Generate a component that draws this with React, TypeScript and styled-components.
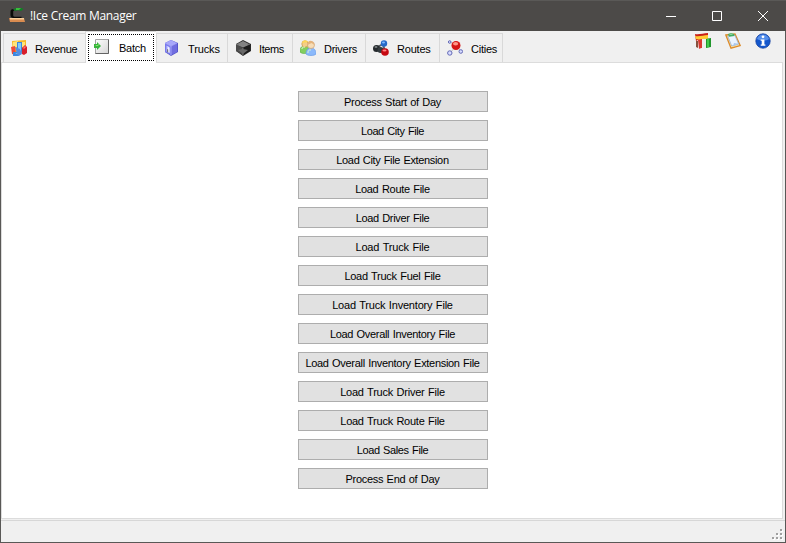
import React from "react";
import styled, { createGlobalStyle, css } from "styled-components";

const GlobalStyle = createGlobalStyle`
  * { box-sizing: border-box; }
  html, body { margin: 0; padding: 0; }
  body { overflow: hidden; background: #f0f0f0; }
`;

const AppWindow = styled.div`
  width: 786px;
  height: 543px;
  display: flex;
  flex-direction: column;
  border: 1px solid #595856;
  border-top: 0;
  background: #f0f0f0;
  color: #000;
  font: 11px/16px "Liberation Sans", Arial, sans-serif;
  word-spacing: 0.7px;
`;

const TitleBar = styled.header`
  flex: 0 0 31px;
  margin: 0 -1px;
  padding-left: 9px;
  display: flex;
  align-items: center;
  background: #4c4a48;
  border-top: 1px solid #5a5957;
  color: #fff;
  word-spacing: 0;
`;

const Title = styled.h1`
  flex: 1;
  margin: 0 0 0 5px;
  font: 400 12px/16px "Open Sans", "Noto Sans", sans-serif;
  letter-spacing: -0.3px;
`;

const Caption = styled.button`
  width: 46px;
  height: 30px;
  padding: 0 1px 0 0;
  border: 0;
  background: none;
  display: grid;
  place-items: center;
`;

const Header = styled.nav`
  flex: 0 0 31px;
  display: flex;
  align-items: flex-end;
  padding-left: 2px;
`;

const Tab = styled.button<{ $width: number; $active?: boolean; $spacing: number }>`
  width: ${(p) => p.$width}px;
  height: 29px;
  padding: 0 0 0 7px;
  display: flex;
  align-items: center;
  gap: 8px;
  border: solid #d9d9d9;
  border-width: 1px 0 0 1px;
  background: #f0f0f0;
  color: #000;
  font: inherit;
  word-spacing: inherit;
  letter-spacing: ${(p) => p.$spacing}px;
  white-space: nowrap;

  &:last-of-type { border-right-width: 1px; }

  ${(p) =>
    p.$active &&
    css`
      height: 32px;
      margin-bottom: -1px;
      padding: 2px;
      background: #fff;
      position: relative;
      z-index: 1;
    `}
`;

const TabLabel = styled.span`
  padding-top: 2px;
`;

const Focus = styled.span`
  width: 66px;
  height: 27px;
  padding: 0 0 2px 5px;
  display: flex;
  align-items: center;
  gap: 9px;
  border: 1px dotted #000;
`;

const Toolbar = styled.div`
  margin-left: auto;
  align-self: flex-start;
  display: flex;
  gap: 14px;
  padding: 2px 14px 0 0;
`;

const Panel = styled.main`
  flex: 0 0 457px;
  width: 782px;
  padding-top: 28px;
  display: flex;
  flex-direction: column;
  align-items: center;
  gap: 8px;
  border: 1px solid #dcdcdc;
  background: #fff;
`;

const BatchButton = styled.button<{ $spacing: number }>`
  width: 190px;
  height: 21px;
  flex: none;
  margin-left: 2px;
  padding: 1px 1px 0 0;
  border: 1px solid #adadad;
  background: #e1e1e1;
  color: #000;
  font: inherit;
  line-height: 18px;
  word-spacing: inherit;
  letter-spacing: ${(p) => p.$spacing}px;
  white-space: nowrap;
`;

const StatusBar = styled.footer`
  flex: 1;
  margin-top: 1px;
  display: flex;
  align-items: flex-end;
  justify-content: flex-end;
  padding: 0 1px 1px 0;
  border-top: 1px solid #d7d7d7;
`;

const Icon = styled.svg`
  width: 16px;
  height: 16px;
  flex: none;
  display: block;
`;

const LogoIcon = () => (
  <Icon viewBox="0 0 16 16">
    <path d="M0 10h15l1 4H1z" fill="#d98c50" />
    <path d="M1 10.2h14v1.2H1z" fill="#ffe0ad" />
    <path d="M5 1C2 1 1.5 2 1.5 4v3c0 2 1 3 3 3h8V8.700H5.500C4.500 8.700 4.200 8 4.200 7V4c0-1 .3-1.500 1.500-1.500z" fill="#090b09" />
    <path d="M4 1.500L7 0h6l1.500 1.300L12 3 9 2.200 6 3z" fill="#147d27" />
    <path d="M7 .3h5l-2 1.400H7z" fill="#46d543" />
  </Icon>
);

const RevenueIcon = () => (
  <Icon viewBox="0 0 16 16">
    <path d="M1 1l14-1v12L2 15z" fill="#f8ba26" />
    <path d="M2 2l5-1v6H2zM10 2h4v5h-4z" fill="#ffe579" />
    <path d="M0 7l4-1 1 9-4-1z" fill="#ef4838" />
    <path d="M6 2h5v8c0 4-2 6-5 6H2v-4h3c1 0 1-1 1-2z" fill="#3c87df" />
    <path d="M7 3h3v7c0 2-2 4-4 4H4c4-1 3-3 3-5z" fill="#80c9fb" />
    <path d="M4 7l5 2 2 5-4 2z" fill="#558de0" />
    <path d="M11 8l3-3 2 2v6l-3 2-2-1z" fill="#d81e2b" />
    <path d="M12 8l2-2 1 1-2 2z" fill="#ff7770" />
  </Icon>
);

const BatchIcon = () => (
  <Icon viewBox="0 0 16 16">
    <defs>
      <linearGradient id="paper" x2="1" y2="1">
        <stop stopColor="#fff" /><stop offset="1" stopColor="#d5d5d5" />
      </linearGradient>
    </defs>
    <path d="M1.5.5h13v14h-13z" fill="url(#paper)" stroke="#a5a5a5" />
    <path d="M14.5.5v14h-13" fill="none" stroke="#636363" />
    <path d="M0 5h3V3l4 4-4 4V9H0z" fill="#37b53c" />
    <path d="M1 6h3V5l1 1-2 1z" fill="#a4f080" />
  </Icon>
);

const TruckIcon = () => (
  <Icon viewBox="1 0 16 16">
    <path d="M8 0l7 3v9l-7 4-6-4V3z" fill="#5555ca" />
    <path d="M8 0l6 3-6 3-6-3z" fill="#a7a7fa" />
    <path d="M2 3l6 3v9l-6-3z" fill="#7779ec" />
    <path d="M8 6l6-3v9l-6 3z" fill="#706de0" />
    <path d="M3.500 5.500l3 1.500v6l-3-1.500z" fill="#c5c7ff" />
    <path d="M5 7l1.500.7v5L5 12z" fill="#f4f4ff" />
    <path d="M4 9l1.200.6v3L4 12z" fill="#757486" />
    <path d="M8 6v9M2 3l6 3 6-3" fill="none" stroke="#b9b9ff" strokeWidth=".7" />
  </Icon>
);

const ItemIcon = () => (
  <Icon viewBox="0 0 16 16">
    <path d="M8 0l8 4v7l-8 5-7-5V4z" fill="#292929" />
    <path d="M8 1l6 3-6 3-6-3z" fill="#828282" />
    <path d="M1 4l7 4v7l-7-4z" fill="#4a4a4a" />
    <path d="M8 8l7-4v7l-7 4z" fill="#1b1b1b" />
    <path d="M1 4l7 3 7-3M8 8v7" fill="none" stroke="#aaa" strokeWidth=".6" />
    <path d="M3 10l5-1 5 1-5 4z" fill="#686868" />
  </Icon>
);

const DriverIcon = () => (
  <Icon viewBox="0 0 16 16">
    <path d="M0 12c0-4 1-6 5-6s4 2 4 6c-2 2-7 2-9 0z" fill="#83cf60" stroke="#57ad41" strokeWidth=".6" />
    <circle cx="5" cy="4" r="3.2" fill="#f4ce87" stroke="#c69543" strokeWidth=".7" />
    <path d="M2 3c1-4 5-3 6-1z" fill="#ffd657" />
    <path d="M6 14c0-4 2-6 5-6s5 2 5 6c-2 2-8 2-10 0z" fill="#8bb9fb" stroke="#6a9de8" strokeWidth=".7" />
    <circle cx="11" cy="5" r="3.5" fill="#f7ddb6" stroke="#cda276" strokeWidth=".7" />
    <path d="M7.5 5c0-6 6-5 7 0l-3-2z" fill="#e5b37b" />
    <path d="M2 9c0-2 1-2 3-2M8 13c0-3 1-3 3-3" stroke="#dcfbd0" fill="none" />
  </Icon>
);

const RouteIcon = () => (
  <Icon viewBox="0 0 16 16">
    <path d="M3 8l7-4 2 8z" fill="none" stroke="#5d6266" strokeWidth="2" />
    <circle cx="11" cy="3.5" r="3.2" fill="#2569c7" />
    <circle cx="3.5" cy="8.500" r="3.5" fill="#252a2d" />
    <circle cx="7.500" cy="10" r="3" fill="#343b3f" />
    <circle cx="12" cy="12" r="3.8" fill="#c60911" />
    <ellipse cx="10.5" cy="2.5" rx="1.5" ry="1" fill="#80baff" />
    <ellipse cx="3" cy="7" rx="1.5" ry=".8" fill="#969da0" />
    <ellipse cx="11.5" cy="10.5" rx="2" ry="1" fill="#ff8585" />
  </Icon>
);

const CityIcon = () => (
  <Icon viewBox="0 0 16 16">
    <path d="M3 2l6 4-6 7M9 6l5 5" fill="none" stroke="#b4b4b4" strokeWidth=".8" />
    <circle cx="9" cy="5.5" r="4.5" fill="#d51515" />
    <ellipse cx="8.6" cy="3.7" rx="2.6" ry="1.7" fill="#ff9585" />
    <g fill="#d8dcff" stroke="#6369b5">
      <circle cx="2.7" cy="2" r="1.3" />
      <circle cx="2.8" cy="13" r="2.2" />
      <circle cx="13.8" cy="11.5" r="1.8" />
    </g>
  </Icon>
);

const FlagsIcon = () => (
  <Icon viewBox="0 0 16 16">
    <path d="M0 1c4 1 8-1 13-1v7H3L1 8z" fill="#c92118" />
    <path d="M0 3c5 1 8-1 13-1v4L5 7 1 6z" fill="#ffcb35" />
    <path d="M1 8h2v7l-2-1z" fill="#87513d" />
    <path d="M3 7c2-1 3-1 5-1v9c-2 0-3 0-4 1z" fill="#d9382f" />
    <path d="M7 6h5v9H7z" fill="#eeeeec" />
    <path d="M11 6c2 0 3-1 5-1v9c-2 0-3 1-5 1z" fill="#21962d" />
    <path d="M12 6l2-.5V14l-2 .5z" fill="#41c94a" />
  </Icon>
);

const ClipboardIcon = () => (
  <Icon viewBox="0 0 16 16">
    <path d="M.8 2l9.200-1 5.200 11.500-9.200 2.700z" fill="#ffe4a5" stroke="#dc8b2c" strokeWidth="1.3" />
    <path d="M2.700 3l7-1 4 9-7 2z" fill="#eaf3ff" stroke="#8ba6cb" strokeWidth=".7" />
    <path d="M3 1l3-1 3 1 .5 2L4 3.800z" fill="#43ac62" />
    <path d="M4.500 1.200h3" stroke="#a8e7b2" />
    <path d="M9 10l4.500.8L8 13z" fill="#a8c7ef" />
  </Icon>
);

const InfoIcon = () => (
  <Icon viewBox="0 0 16 16">
    <circle cx="8" cy="8" r="7.2" fill="#1457cc" stroke="#1541a1" strokeWidth=".8" />
    <path d="M2 6c1-6 11-6 12 0-3 2-8 2-12 0z" fill="#548eeb" />
    <circle cx="8" cy="3.8" r="1.4" fill="#fff" />
    <path d="M5.7 6.4h3.7v5h1v1.3H5.7v-1.3h1V7.7h-1z" fill="#fff" />
  </Icon>
);

const Grip = () => (
  <svg width="12" height="12" shapeRendering="crispEdges">
    {[[8, 0], [4, 4], [8, 4], [0, 8], [4, 8], [8, 8]].map(([x, y]) => (
      <g key={`${x}-${y}`}>
        <path d={`M${x + 1} ${y + 1}h2v2h-2z`} fill="#fff" />
        <path d={`M${x} ${y}h2v2h-2z`} fill="#a0a0a0" />
      </g>
    ))}
  </svg>
);

type TabItem = { label: string; width: number; icon: React.FC; spacing: number };

const tabs: TabItem[] = [
  { label: "Revenue", width: 82, icon: RevenueIcon, spacing: -0.22 },
  { label: "Batch", width: 71, icon: BatchIcon, spacing: -0.25 },
  { label: "Trucks", width: 71, icon: TruckIcon, spacing: -0.14 },
  { label: "Items", width: 65, icon: ItemIcon, spacing: -0.4 },
  { label: "Drivers", width: 73, icon: DriverIcon, spacing: -0.25 },
  { label: "Routes", width: 74, icon: RouteIcon, spacing: -0.2 },
  { label: "Cities", width: 64, icon: CityIcon, spacing: -0.25 },
];

const actions: [string, number][] = [
  ["Process Start of Day", -0.3],
  ["Load City File", -0.4],
  ["Load City File Extension", -0.35],
  ["Load Route File", -0.29],
  ["Load Driver File", -0.34],
  ["Load Truck File", -0.17],
  ["Load Truck Fuel File", -0.28],
  ["Load Truck Inventory File", -0.2],
  ["Load Overall Inventory File", -0.31],
  ["Load Overall Inventory Extension File", -0.31],
  ["Load Truck Driver File", -0.23],
  ["Load Truck Route File", -0.25],
  ["Load Sales File", -0.38],
  ["Process End of Day", -0.3],
];

export default function App() {
  return (
    <>
      <GlobalStyle />
      <AppWindow>
        <TitleBar>
          <LogoIcon />
          <Title>!Ice Cream Manager</Title>
          <Caption aria-label="Minimize">
            <svg width="10" height="10"><path d="M0 5.5h10" stroke="#fff" /></svg>
          </Caption>
          <Caption aria-label="Maximize">
            <svg width="10" height="10"><path d="M.5.5h9v9h-9z" fill="none" stroke="#fff" /></svg>
          </Caption>
          <Caption aria-label="Close">
            <svg width="10" height="10"><path d="M0 0l10 10M10 0L0 10" stroke="#fff" /></svg>
          </Caption>
        </TitleBar>
        <Header>
          {tabs.map(({ label, width, icon: TabIcon, spacing }) => (
            <Tab key={label} $width={width} $spacing={spacing} $active={label === "Batch"}>
              {label === "Batch" ? (
                <Focus><TabIcon /><TabLabel>{label}</TabLabel></Focus>
              ) : (
                <><TabIcon /><TabLabel>{label}</TabLabel></>
              )}
            </Tab>
          ))}
          <Toolbar>
            <FlagsIcon />
            <ClipboardIcon />
            <InfoIcon />
          </Toolbar>
        </Header>
        <Panel>
          {actions.map(([label, spacing]) => (
            <BatchButton key={label} $spacing={spacing}>{label}</BatchButton>
          ))}
        </Panel>
        <StatusBar><Grip /></StatusBar>
      </AppWindow>
    </>
  );
}
